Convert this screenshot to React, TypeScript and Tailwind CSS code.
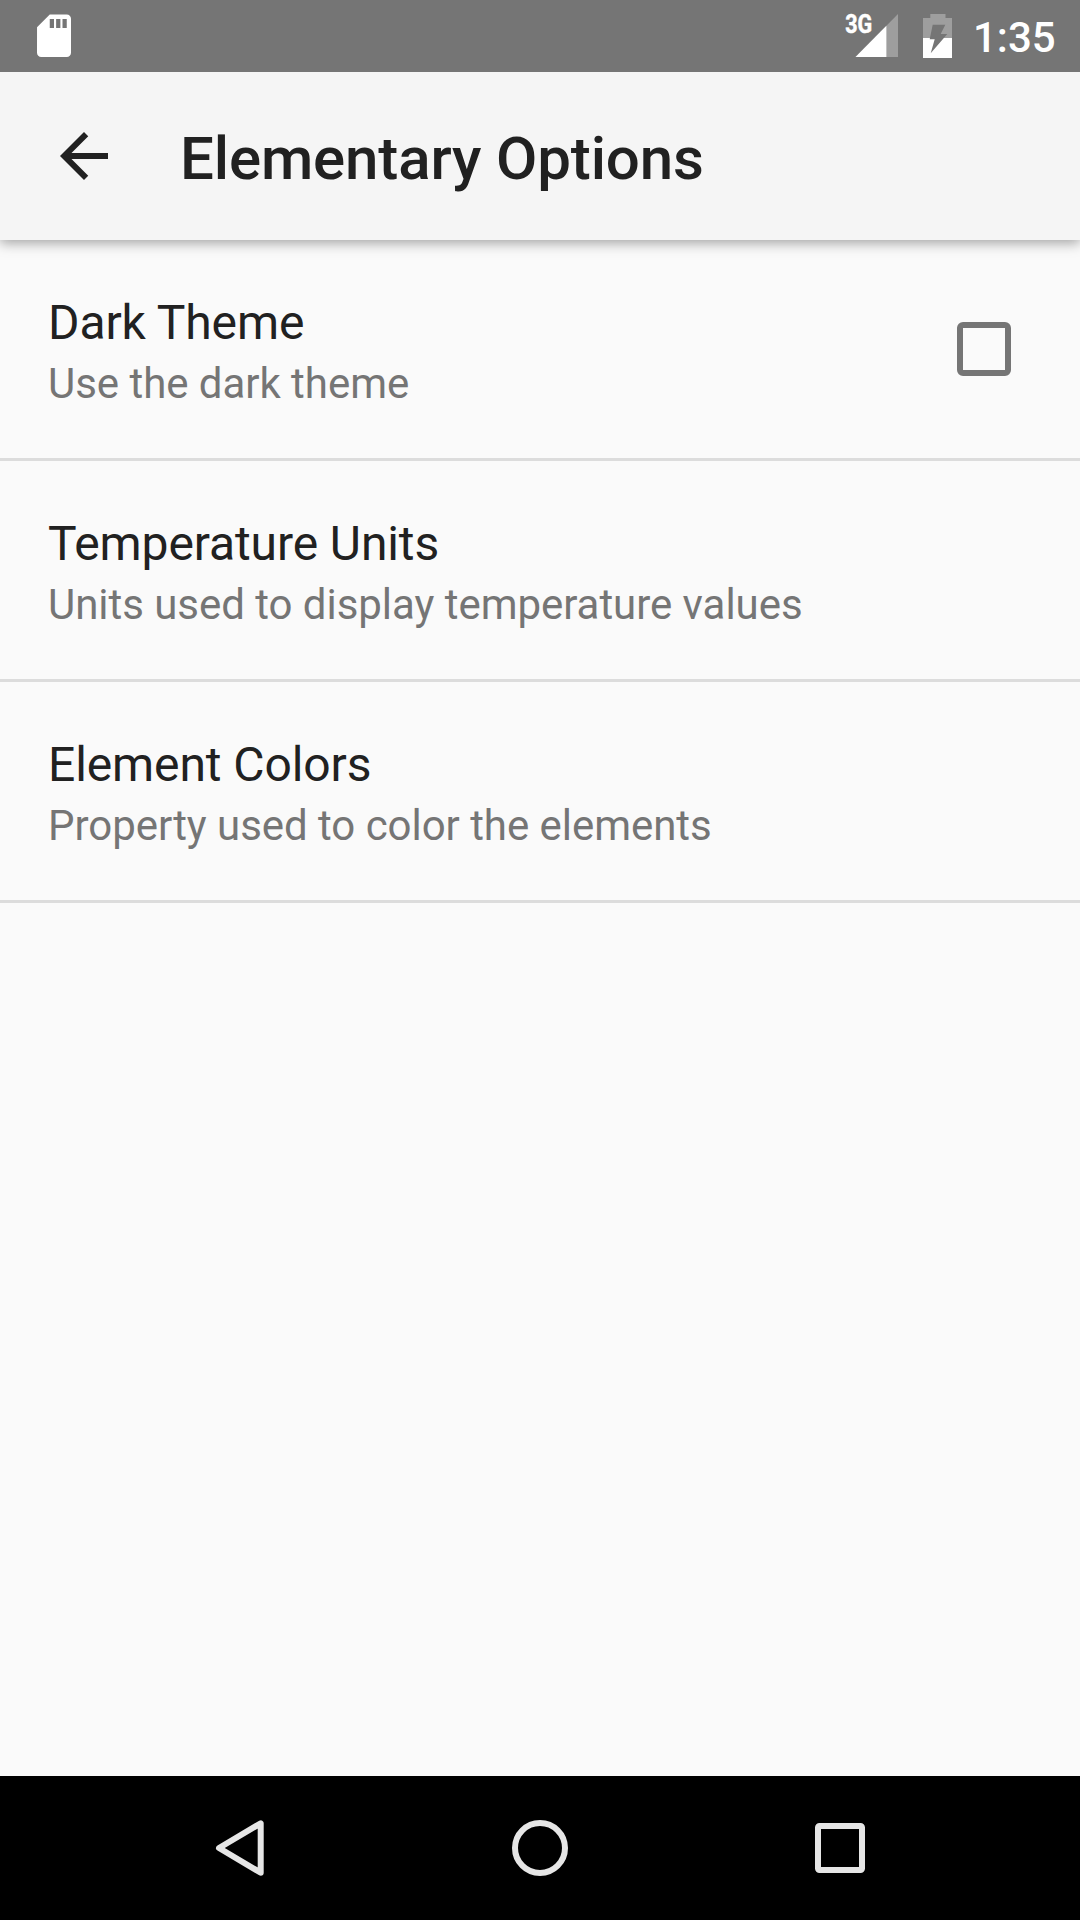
import React from "react";

const rows = [
  { title: "Dark Theme", summary: "Use the dark theme", checkbox: true },
  { title: "Temperature Units", summary: "Units used to display temperature values" },
  { title: "Element Colors", summary: "Property used to color the elements" },
];

function StatusBar() {
  return (
    <div className="relative z-20 flex h-[72px] shrink-0 items-center justify-between bg-[#757575] pl-[28px] pr-[25px] text-white">
      <svg width="52" height="72" viewBox="0 0 52 72" fill="#fff">
        <path
          transform="translate(0.5 10.3) scale(2.125)"
          fillRule="evenodd"
          d="M18 2h-8L4.02 8 4 20c0 1.1.9 2 2 2h12c1.1 0 2-.9 2-2V4c0-1.1-.9-2-2-2zM12 8.3h-2V4.1h2zm3 0h-2V4.1h2zm3 0h-2V4.1h2z"
        />
      </svg>
      <div className="flex items-center">
        <svg width="120" height="72" viewBox="840 0 120 72">
          <path d="M898 14V57H855.5z" fill="#9e9e9e" />
          <path d="M886.4 25.8V57H855.5z" fill="#fff" />
          <text x="845.2" y="33.3" fontSize="25" fontWeight="700" fill="#fff" stroke="#fff" strokeWidth="0.5" fontFamily="Roboto" textLength="27" lengthAdjust="spacingAndGlyphs">3G</text>
          <path d="M930.3 14h15.2v4h6.5v20h-29V18h7.3z" fill="#9e9e9e" />
          <path d="M923 38h29v20h-29z" fill="#fff" />
          <path d="M932.7 24.7h12.6l-4.6 9.3h6.6L930.7 53.300l4-14h-5z" fill="#757575" />
        </svg>
        <span className="ml-[13px] w-[82px] pt-1 text-[42px] font-medium leading-[68px]">1:35</span>
      </div>
    </div>
  );
}

function AppBar() {
  return (
    <header className="relative z-10 flex h-[168px] shrink-0 items-center bg-[#f5f5f5] pl-12 shadow-[0_3px_12px_rgba(0,0,0,0.36)]">
      <svg width="72" height="72" viewBox="0 0 24 24" fill="#212121">
        <path d="M20 11H7.83l5.59-5.59L12 4l-8 8 8 8 1.41-1.41L7.83 13H20v-2z" />
      </svg>
      <h1 className="ml-[60px] pt-[5px] text-[60px] font-medium leading-[70px] tracking-[-0.13px] text-[#212121]">Elementary Options</h1>
    </header>
  );
}

function NavBar() {
  return (
    <nav className="flex h-36 shrink-0 items-center justify-between bg-black px-[204px]">
      <svg width="72" height="144" viewBox="204 0 72 144" fill="none" stroke="#e6e6e6" strokeWidth="6" strokeLinejoin="round">
        <path d="M260.7 47.3V96.7L219 72z" />
      </svg>
      <svg width="72" height="144" viewBox="504 0 72 144" fill="none" stroke="#e6e6e6" strokeWidth="6">
        <circle cx="540" cy="72" r="25" />
      </svg>
      <svg width="72" height="144" viewBox="804 0 72 144" fill="none" stroke="#e6e6e6" strokeWidth="6">
        <rect x="818" y="50" width="44" height="44" rx="1.5" />
      </svg>
    </nav>
  );
}

export default function App() {
  return (
    <div className="flex h-[1920px] w-[1080px] flex-col overflow-hidden bg-[#fafafa] font-['Roboto',sans-serif]">
      <StatusBar />
      <AppBar />
      <main className="flex-1">
        {rows.map((row) => (
          <div key={row.title} className="flex h-[221px] items-center justify-between border-b-[3px] border-[#dcdcdc] pl-12 pr-[69px]">
            <div className="pt-2">
              <div className="text-[48px] leading-[57px] tracking-[-0.1px] text-[#212121]">{row.title}</div>
              <div className="mt-1 text-[42px] leading-[57px] tracking-[-0.04px] text-[#757575]">{row.summary}</div>
            </div>
            {row.checkbox && (
              <div className="h-[54px] w-[54px] rounded-[6px] border-6 border-[#757575]" />
            )}
          </div>
        ))}
      </main>
      <NavBar />
    </div>
  );
}
